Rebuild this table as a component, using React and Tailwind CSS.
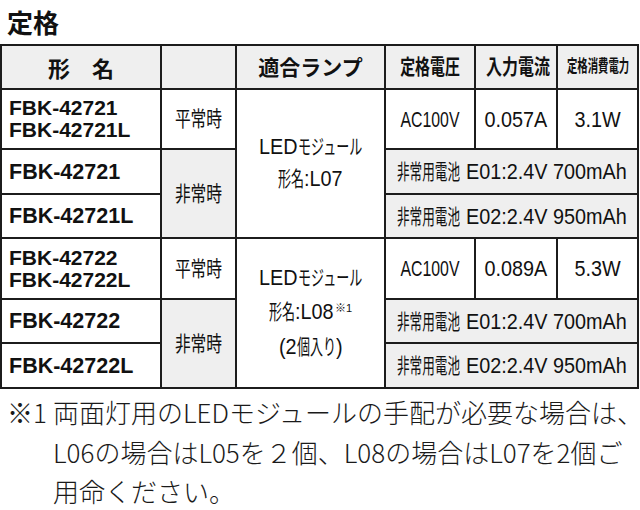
import React from "react";

const td = "border-r-2 border-b-2 border-[#1c1c1c] p-0 text-center align-middle whitespace-nowrap overflow-hidden";
const gray = "bg-[#efefef]";

// squeeze a run of text horizontally into a fixed visual width
function Sq({ w, c, children }) {
  return (
    <span className={"inline-block whitespace-nowrap " + w}>
      <span className={"inline-block origin-left " + c}>{children}</span>
    </span>
  );
}

function Lat({ c, children }) {
  return <span className={"inline-block whitespace-nowrap text-[22px] " + c}>{children}</span>;
}

function Model({ lines, single }) {
  return (
    <td className={td + " text-left pl-[7px] font-bold text-[#111]"}>
      {single ? (
        <div className="text-[21.5px] leading-[24px]">{lines[0]}</div>
      ) : (
        lines.map((l) => (
          <div key={l} className="text-[21px] leading-[22px]">
            {l}
          </div>
        ))
      )}
    </td>
  );
}

function Battery({ code, cap }) {
  return (
    <td colSpan={3} className={td + " " + gray}>
      <Sq w="w-[63px]" c="text-[21px] scale-x-[0.6]">非常用電池</Sq>
      <span className="inline-block w-[6px]" />
      <Sq w="w-[161px]" c="text-[22px] scale-x-[0.9]">
        {code}:2.4V {cap}
      </Sq>
    </td>
  );
}

function Mode({ label, rows, shade }) {
  return (
    <td rowSpan={rows} className={td + (shade ? " " + gray : "")}>
      <span className="inline-block text-[21px] scale-x-[0.75]">{label}</span>
    </td>
  );
}

function Lamp({ rows, children }) {
  return <td rowSpan={rows} className={td}>{children}</td>;
}

function Module() {
  return (
    <>
      <Sq w="w-[39px]" c="text-[22px] scale-x-[0.9]">LED</Sq>
      <Sq w="w-[65px]" c="text-[21px] scale-x-[0.62]">モジュール</Sq>
    </>
  );
}

export default function App() {
  return (
    <div className="w-[640px] h-[510px] overflow-hidden bg-white text-[#111] font-['Liberation_Sans','Noto_Sans_CJK_JP',sans-serif]">
      <h1 className="pt-[9px] pb-[9px] pl-[7px] text-[26px] leading-[26px] font-bold font-['Noto_Sans_CJK_JP',sans-serif]">
        定格
      </h1>

      <table className="border-separate border-spacing-0 table-fixed w-[639px] border-l-2 border-t-2 border-[#1c1c1c]">
        <colgroup>
          <col className="w-[160px]" />
          <col className="w-[75px]" />
          <col className="w-[149px]" />
          <col className="w-[90px]" />
          <col className="w-[82px]" />
          <col className="w-[81px]" />
        </colgroup>
        <tbody>
          <tr className="h-[44px] font-bold">
            <td className={td + " " + gray + " text-[22px] font-['Noto_Sans_CJK_JP',sans-serif]"}>形　名</td>
            <td className={td + " " + gray} />
            <td className={td + " " + gray + " text-[21px] font-['Noto_Sans_CJK_JP',sans-serif]"}>適合ランプ</td>
            <td className={td + " " + gray}>
              <span className="inline-block text-[21px] scale-x-[0.71]">定格電圧</span>
            </td>
            <td className={td + " " + gray}>
              <span className="inline-block text-[21px] scale-x-[0.76]">入力電流</span>
            </td>
            <td className={td + " " + gray}>
              <Sq w="w-[62px]" c="text-[17px] scale-x-[0.61]">定格消費電力</Sq>
            </td>
          </tr>

          <tr className="h-[60px]">
            <Model lines={["FBK-42721", "FBK-42721L"]} />
            <Mode label="平常時" rows={1} />
            <Lamp rows={3}>
              <div className="leading-[30px]">
                <Module />
              </div>
              <div className="leading-[30px]">
                <Sq w="w-[26px]" c="text-[21px] scale-x-[0.62]">形名</Sq>
                <Sq w="w-[39px]" c="text-[22px] scale-x-[0.9]">:L07</Sq>
              </div>
            </Lamp>
            <td className={td}>
              <Lat c="scale-x-[0.72]">AC100V</Lat>
            </td>
            <td className={td}>
              <Lat c="scale-x-[0.9]">0.057A</Lat>
            </td>
            <td className={td}>
              <Lat c="scale-x-[0.9]">3.1W</Lat>
            </td>
          </tr>

          <tr className="h-[45px]">
            <Model lines={["FBK-42721"]} single />
            <Mode label="非常時" rows={2} shade />
            <Battery code="E01" cap="700mAh" />
          </tr>

          <tr className="h-[44px]">
            <Model lines={["FBK-42721L"]} single />
            <Battery code="E02" cap="950mAh" />
          </tr>

          <tr className="h-[61px]">
            <Model lines={["FBK-42722", "FBK-42722L"]} />
            <Mode label="平常時" rows={1} />
            <Lamp rows={3}>
              <div className="leading-[32px]">
                <Module />
              </div>
              <div className="leading-[32px]">
                <Sq w="w-[26px]" c="text-[21px] scale-x-[0.62]">形名</Sq>
                <Sq w="w-[39px]" c="text-[22px] scale-x-[0.9]">:L08</Sq>
                <span className="relative -top-[7px] text-[11px] ml-[1px]">※1</span>
              </div>
              <div className="leading-[32px]">
                <Sq w="w-[18px]" c="text-[22px] scale-x-[0.9]">(2</Sq>
                <Sq w="w-[39px]" c="text-[21px] scale-x-[0.62]">個入り</Sq>
                <Sq w="w-[7px]" c="text-[22px] scale-x-[0.9]">)</Sq>
              </div>
            </Lamp>
            <td className={td}>
              <Lat c="scale-x-[0.72]">AC100V</Lat>
            </td>
            <td className={td}>
              <Lat c="scale-x-[0.9]">0.089A</Lat>
            </td>
            <td className={td}>
              <Lat c="scale-x-[0.9]">5.3W</Lat>
            </td>
          </tr>

          <tr className="h-[44px]">
            <Model lines={["FBK-42722"]} single />
            <Mode label="非常時" rows={2} shade />
            <Battery code="E01" cap="700mAh" />
          </tr>

          <tr className="h-[45px]">
            <Model lines={["FBK-42722L"]} single />
            <Battery code="E02" cap="950mAh" />
          </tr>
        </tbody>
      </table>

      <div className="mt-[3px] flex pl-[7px] text-[26px] leading-[39.5px] font-light text-[#1a1a1a] whitespace-nowrap font-['Noto_Sans_CJK_JP',sans-serif]">
        <span className="w-[46px] shrink-0">※1</span>
        <div>
          両面灯用のLEDモジュールの手配が必要な場合は、
          <br />
          L06の場合はL05を２個、L08の場合はL07を2個ご
          <br />
          用命ください。
        </div>
      </div>
    </div>
  );
}
